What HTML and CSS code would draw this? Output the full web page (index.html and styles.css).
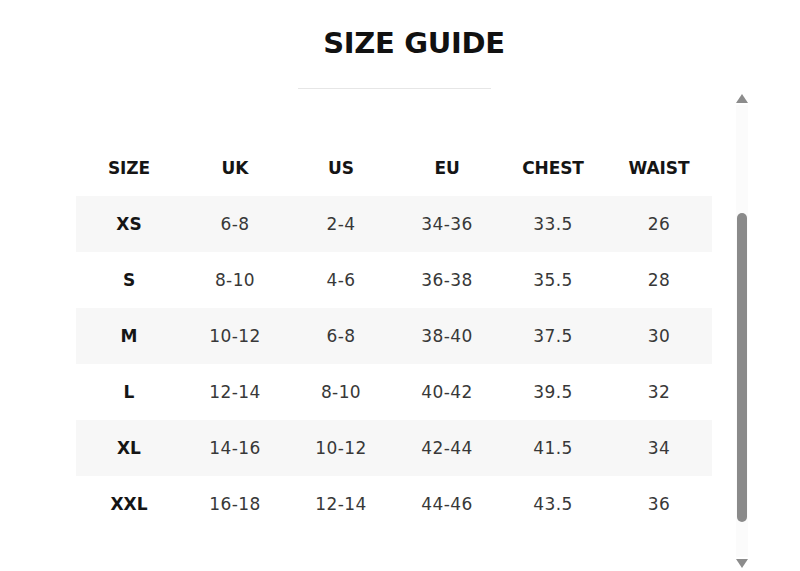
FILE: index.html
```html
<!DOCTYPE html>
<html>
<head>
<meta charset="utf-8">
<link rel="stylesheet" href="styles.css">
</head>
<body>
<div class="page">
  <main class="content">
    <h1 class="title">SIZE GUIDE</h1>
    <div class="rule"></div>
    <table class="sizes">
      <thead>
        <tr><th>SIZE</th><th>UK</th><th>US</th><th>EU</th><th>CHEST</th><th>WAIST</th></tr>
      </thead>
      <tbody>
        <tr class="shade"><th>XS</th><td>6-8</td><td>2-4</td><td>34-36</td><td>33.5</td><td>26</td></tr>
        <tr><th>S</th><td>8-10</td><td>4-6</td><td>36-38</td><td>35.5</td><td>28</td></tr>
        <tr class="shade"><th>M</th><td>10-12</td><td>6-8</td><td>38-40</td><td>37.5</td><td>30</td></tr>
        <tr><th>L</th><td>12-14</td><td>8-10</td><td>40-42</td><td>39.5</td><td>32</td></tr>
        <tr class="shade"><th>XL</th><td>14-16</td><td>10-12</td><td>42-44</td><td>41.5</td><td>34</td></tr>
        <tr><th>XXL</th><td>16-18</td><td>12-14</td><td>44-46</td><td>43.5</td><td>36</td></tr>
      </tbody>
    </table>
  </main>
  <aside class="scrollbar">
    <div class="arrow up"></div>
    <div class="track"><div class="thumb"></div></div>
    <div class="arrow down"></div>
  </aside>
</div>
</body>
</html>
```

FILE: styles.css
```css
html, body {
  margin: 0;
  padding: 0;
  background: #ffffff;
}
body {
  font-family: "DejaVu Sans", "Noto Sans", sans-serif;
  color: #151515;
}
.page {
  display: flex;
  width: 800px;
  height: 571px;
  overflow: hidden;
}
.content {
  width: 788px;
  padding-left: 76px;
  box-sizing: border-box;
}
.title {
  margin: 25px 0 0 0;
  width: 676px;
  text-align: center;
  font-family: "DejaVu Sans", sans-serif;
  font-weight: 700;
  font-size: 29px;
  line-height: 36px;
  letter-spacing: -0.3px;
  color: #111;
}
.rule {
  width: 193px;
  height: 1px;
  background: #e6e6e6;
  margin: 27px 0 0 222px;
}
.sizes {
  margin-top: 51px;
  border-collapse: collapse;
  width: 636px;
  table-layout: fixed;
}
.sizes th, .sizes td {
  height: 56px;
  padding: 0;
  text-align: center;
  vertical-align: middle;
  font-size: 17px;
}
.sizes thead th {
  font-weight: 700;
  font-size: 17px;
  letter-spacing: -0.1px;
}
.sizes tbody th {
  font-weight: 700;
}
.sizes td {
  font-weight: 400;
  color: #383838;
  letter-spacing: 0.4px;
}
.sizes tr.shade {
  background: #f7f7f7;
}
.scrollbar {
  width: 12px;
  margin-left: -52px;
  display: flex;
  flex-direction: column;
  align-items: center;
  padding-top: 94px;
}
.arrow {
  width: 0;
  height: 0;
  border-left: 6px solid transparent;
  border-right: 6px solid transparent;
}
.arrow.up {
  border-bottom: 9px solid #8c8c8c;
}
.arrow.down {
  border-top: 9px solid #8c8c8c;
}
.track {
  width: 12px;
  height: 452px;
  margin: 2px 0;
  background: #fbfbfb;
  display: flex;
  flex-direction: column;
  padding-top: 108px;
  box-sizing: border-box;
  align-items: center;
}
.thumb {
  width: 10px;
  height: 309px;
  border-radius: 5px;
  background: #8a8a8a;
}
```
